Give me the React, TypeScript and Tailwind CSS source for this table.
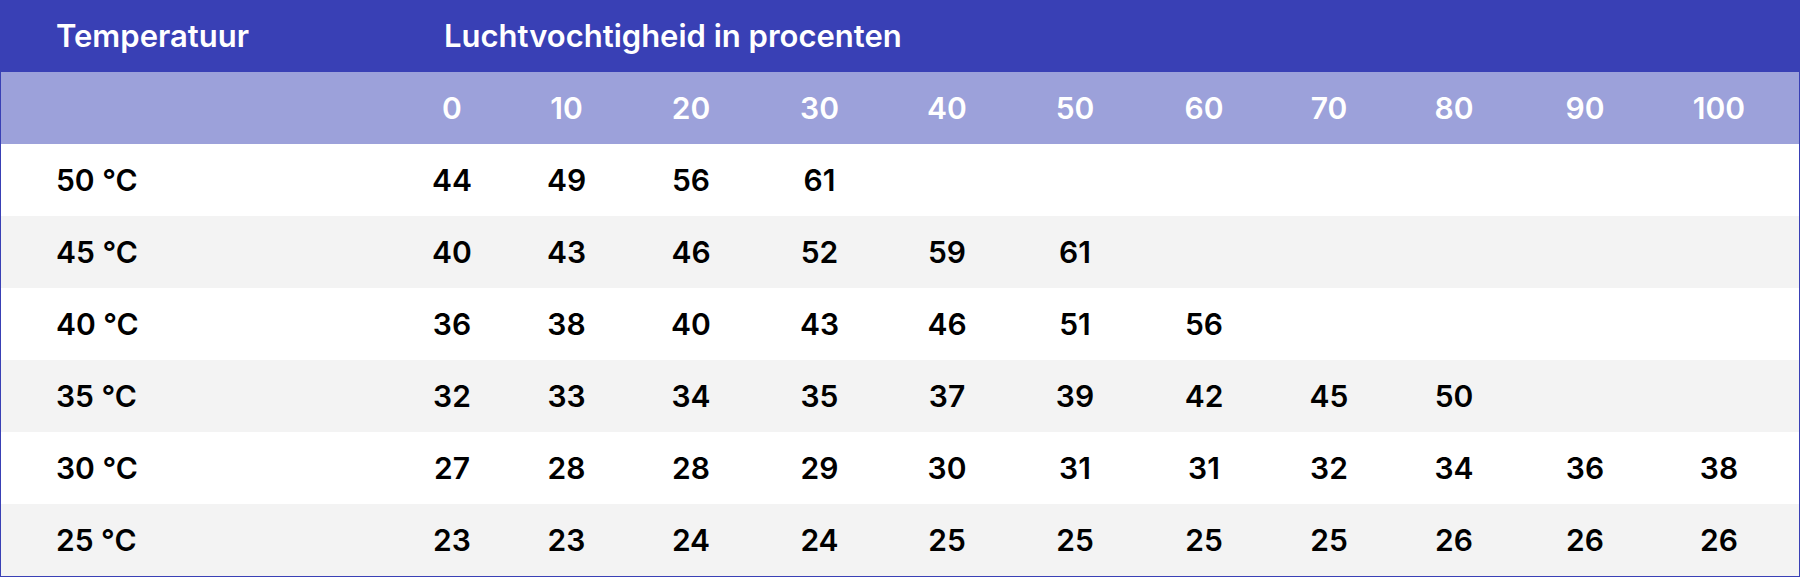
import React from "react";

const hums = ["0", "10", "20", "30", "40", "50", "60", "70", "80", "90", "100"];

const rows: { temp: string; values: string[] }[] = [
  { temp: "50 °C", values: ["44", "49", "56", "61"] },
  { temp: "45 °C", values: ["40", "43", "46", "52", "59", "61"] },
  { temp: "40 °C", values: ["36", "38", "40", "43", "46", "51", "56"] },
  { temp: "35 °C", values: ["32", "33", "34", "35", "37", "39", "42", "45", "50"] },
  { temp: "30 °C", values: ["27", "28", "28", "29", "30", "31", "31", "32", "34", "36", "38"] },
  { temp: "25 °C", values: ["23", "23", "24", "24", "25", "25", "25", "25", "26", "26", "26"] },
];

// column tracks measured from the screenshot
const grid =
  "grid grid-cols-[396px_110px_119px_130px_127px_128px_128px_130px_120px_130px_132px_136px]";

const App = () => {
  return (
    <div
      className="w-[1800px] border-x border-b border-[#3940b5] bg-white text-black"
      style={{ fontFamily: "Inter, 'Noto Sans', sans-serif" }}
    >
      {/* title row */}
      <div className={`${grid} h-[72px] bg-[#3940b5] text-white text-[31px] font-semibold`}>
        <div className="flex items-center pl-[55px]">Temperatuur</div>
        <div className="col-span-11 flex items-center pl-[47px]">Luchtvochtigheid in procenten</div>
      </div>

      {/* humidity row */}
      <div className={`${grid} h-[72px] bg-[#9ca1da] text-white text-[30px] font-semibold`}>
        <div />
        {hums.map((h) => (
          <div key={h} className="flex items-center justify-center">
            {h}
          </div>
        ))}
      </div>

      {rows.map((r, i) => (
        <div
          key={r.temp}
          className={`${grid} h-[72px] text-[30px] font-semibold ${i % 2 === 1 ? "bg-[#f3f3f3]" : "bg-white"}`}
        >
          <div className="flex items-center pl-[55px]">{r.temp}</div>
          {hums.map((h, j) => (
            <div key={h} className="flex items-center justify-center">
              {r.values[j] ?? ""}
            </div>
          ))}
        </div>
      ))}
    </div>
  );
};

export default App;
